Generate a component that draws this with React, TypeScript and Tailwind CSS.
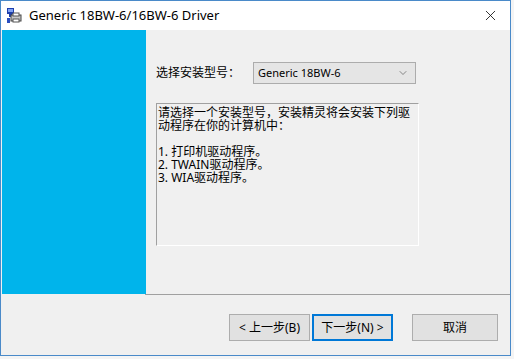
import { ChevronDown, X } from "lucide-react";

const LINES = [
  "请选择一个安装型号，安装精灵将会安装下列驱",
  "动程序在你的计算机中：",
  "",
  "1. 打印机驱动程序。",
  "2. TWAIN驱动程序。",
  "3. WIA驱动程序。",
];

const AppIcon = () => (
  <svg width="17" height="17" viewBox="0 0 17 17">
    <rect x="1" y="1" width="7" height="6" fill="#1d3fae" />
    <rect x="2" y="2" width="5" height="3" fill="#7fa0f0" />
    <rect x="3" y="7" width="3" height="3" fill="#1d3fae" />
    <rect x="5" y="8" width="10" height="6" fill="#c9c9c9" stroke="#444" />
    <rect x="7" y="6" width="6" height="3" fill="#fff" stroke="#555" />
    <rect x="7" y="12" width="6" height="3" fill="#fff" stroke="#555" />
    <rect x="1" y="11" width="3" height="5" fill="#2a4ec0" />
  </svg>
);

const Button = ({ label, primary }: { label: string; primary?: boolean }) => (
  <div
    className={
      "h-[27px] flex items-center justify-center text-[12px] text-black bg-[#e1e1e1] " +
      (primary ? "border-2 border-[#0078d7]" : "border border-[#adadad]")
    }
  >
    {label}
  </div>
);

const App = () => {
  return (
    <div
      className="w-[514px] h-[359px] bg-[#f4f4f4] overflow-hidden"
      style={{ fontFamily: '"Noto Sans", "Noto Sans CJK SC", sans-serif' }}
    >
      <div className="w-[511px] h-[356px] border border-[#4a8ac9] bg-[#f0f0f0] flex flex-col">
        {/* title bar */}
        <div className="h-[29px] bg-white flex items-center shrink-0">
          <div className="ml-[5px] mr-[6px]">
            <AppIcon />
          </div>
          <span className="text-[13px] text-black">Generic 18BW-6/16BW-6 Driver</span>
          <X className="ml-auto mr-[11px]" size={17} strokeWidth={1.2} color="#111" />
        </div>

        <div className="flex h-[264px] shrink-0">
          <div className="w-[144px] ml-[1px] bg-[#00b4eb]" />
          <div className="flex-1 pl-[10px] pt-[32px]">
            <div className="flex items-center h-[22px]">
              <span className="w-[97px] text-[12px] text-black">选择安装型号：</span>
              <div className="w-[163px] h-[22px] bg-[#e5e5e5] border border-[#acacac] flex items-center pl-[4px] pr-[6px]">
                <span className="text-[11px] text-black">Generic 18BW-6</span>
                <ChevronDown className="ml-auto" size={12} strokeWidth={1.2} color="#444" />
              </div>
            </div>
            <div className="mt-[19px] w-[263px] h-[143px] border-t border-l border-[#a0a0a0] border-r border-b border-r-white border-b-white pl-[1px] pt-[2px]">
              {LINES.map((line, key) => (
                <div key={key} className="h-[13px] leading-[13px] text-[12px] text-black whitespace-nowrap">
                  {line}
                </div>
              ))}
            </div>
          </div>
        </div>

        <div className="border-t border-[#a0a0a0] ml-[144px]" />

        <div className="flex pt-[19px] pl-[228px]">
          <div className="w-[81px]">
            <Button label="< 上一步(B)" />
          </div>
          <div className="w-[81px] ml-[2px]">
            <Button label="下一步(N) >" primary />
          </div>
          <div className="w-[86px] ml-[19px]">
            <Button label="取消" />
          </div>
        </div>
      </div>
    </div>
  );
};

export default App;
